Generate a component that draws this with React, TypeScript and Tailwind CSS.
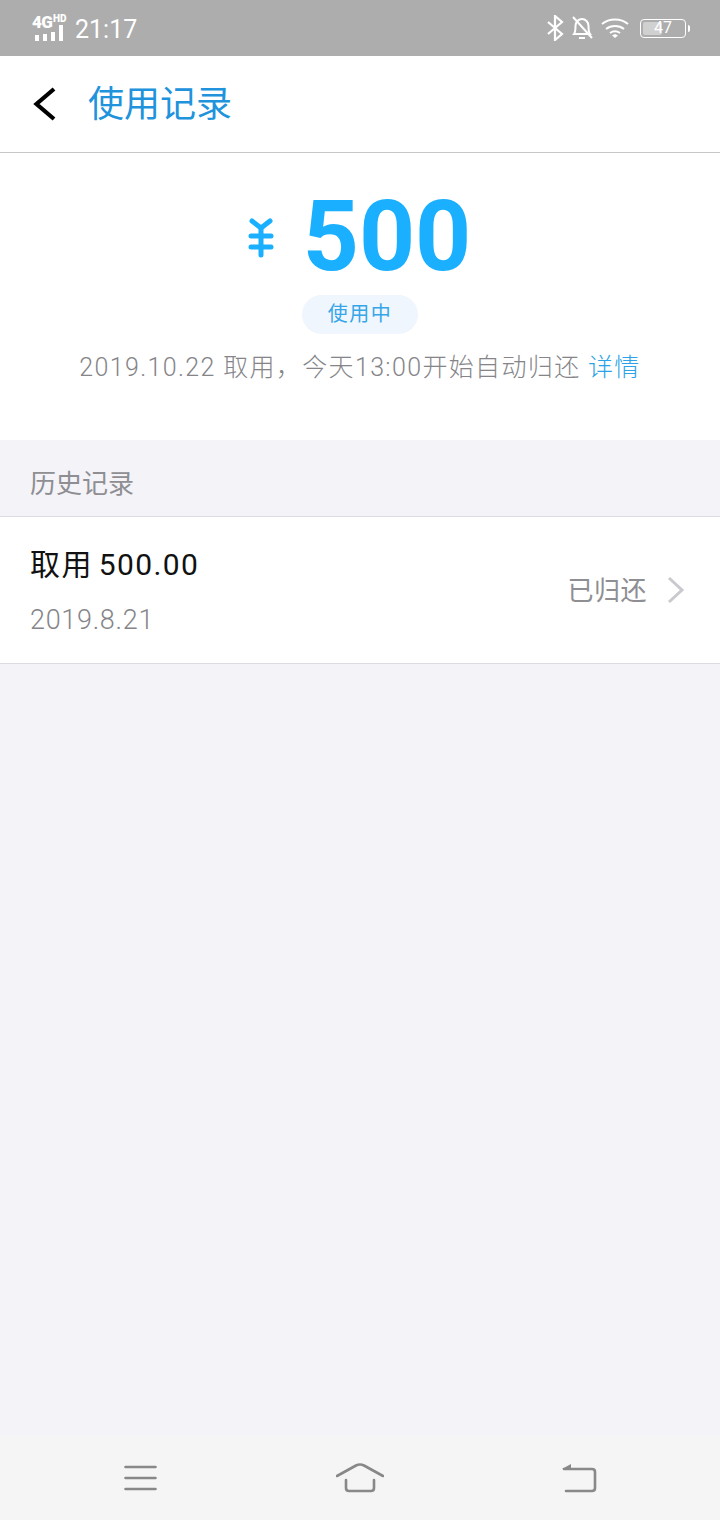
const CJK = 'Roboto, "Noto Sans CJK SC", sans-serif'

const StatusBar = () => (
  <div className="h-14 shrink-0 bg-[#adadad] flex items-center justify-between pl-8 pr-[34px] text-white">
    <div className="flex items-center">
      <div className="relative w-[34px] h-[28px] mr-[9px]">
        <span className="absolute left-0 top-[-1px] text-[17px] leading-[18px] font-black font-['Roboto',sans-serif] tracking-[-0.5px]">4G</span>
        <span className="absolute left-[21px] top-[0px] text-[10px] leading-[10px] font-black font-['Roboto',sans-serif]">HD</span>
        <svg className="absolute left-[3px] top-[11px]" width="29" height="18" viewBox="0 0 29 18" fill="#fff">
          <rect x="0" y="10" width="4" height="6" />
          <rect x="8" y="9" width="4" height="7" />
          <rect x="16" y="7" width="4" height="9" />
          <rect x="24" y="0" width="4" height="16" />
        </svg>
      </div>
      <span className="text-[25px] leading-none mt-[3px] font-['Roboto',sans-serif]">21:17</span>
    </div>
    <div className="flex items-center">
      <svg width="18" height="26" viewBox="0 0 18 26" fill="none" stroke="#fff" strokeWidth="2.2" className="mr-[7px]">
        <path d="M2 7l14 12-7 6V1l7 6L2 19" />
      </svg>
      <svg width="22" height="26" viewBox="0 0 22 26" fill="none" stroke="#fff" strokeWidth="2" className="mr-[8px]">
        <path d="M3 19c1.500-2 1.500-5 1.500-8 0-4 3-7 6.500-7s6.500 3 6.500 7c0 3 0 6 1.500 8z" />
        <path d="M8 23h6" />
        <path d="M2 2l19 21" />
      </svg>
      <svg width="28" height="22" viewBox="0 0 28 22" fill="none" stroke="#fff" strokeWidth="2" className="mr-[11px]">
        <path d="M1 7c7-6 19-6 26 0" />
        <path d="M5 12c5-4 13-4 18 0" />
        <path d="M9 16c3-2 7-2 10 0" />
        <path d="M11 18.500l3-1.500 3 1.500-3 2.500z" fill="#fff" stroke="none" />
      </svg>
      <div className="relative w-[46px] h-[19px] rounded-[4px] border border-white flex items-center justify-center">
        <div className="absolute left-[2px] top-[2px] bottom-[2px] w-[19px] rounded-[2px] bg-[#d0d0d0]" />
        <span className="relative text-[16px] leading-none font-['Roboto',sans-serif]">47</span>
        <div className="absolute right-[-5px] top-[5px] w-[2px] h-[7px] rounded-r-sm bg-white" />
      </div>
    </div>
  </div>
)

const Header = () => (
  <div className="h-[97px] shrink-0 bg-white border-b border-[#c8c8c8] flex items-center pl-[33px] pb-[1px]">
    <svg width="23" height="34" viewBox="0 0 23 34" fill="none" stroke="#000" strokeWidth="4.2">
      <path d="M21 2L3.500 17 21 32" />
    </svg>
    <h1 className="ml-[32px] mt-[3px] text-[36px] leading-none text-[#2093dc]" style={{ fontFamily: CJK }}>使用记录</h1>
  </div>
)

const Hero = () => (
  <div className="h-[287px] shrink-0 bg-white flex flex-col items-center">
    <div className="flex items-center h-[142px] pr-[1px]">
      <svg width="26" height="40" viewBox="0 0 26 40" fill="none" stroke="#1ab0ff" strokeWidth="5" strokeLinecap="round" strokeLinejoin="round" className="mr-[29px] mt-[28px]">
        <path d="M4 3l9 7 9-7" />
        <path d="M3 18h20M3 29h20M13 11v26" />
      </svg>
      <span className="text-[98px] leading-none font-bold text-[#1ab0ff] font-['Roboto',sans-serif] mt-[25px]">500</span>
    </div>
    <div className="w-[116px] h-[39px] pb-[2px] rounded-full bg-[#f0f6fd] flex items-center justify-center text-[20px] tracking-[1.5px] text-[#35a6e8]" style={{ fontFamily: CJK }}>
      使用中
    </div>
    <p className="mt-[16px] text-[25px] leading-[36px] tracking-[1.35px] font-light text-[#858589] whitespace-nowrap" style={{ fontFamily: CJK }}>
      2019.10.22 取用，今天13:00开始自动归还 <span className="text-[#2ba3e6]">详情</span>
    </p>
  </div>
)

const HistoryRow = () => (
  <div className="h-[148px] shrink-0 bg-white border-y border-[#dcdce0] flex items-center justify-between pl-[30px] pr-[35px]">
    <div className="pt-[4px]">
      <div className="text-[30px] leading-[40px] tracking-[1.4px] [word-spacing:-3px] text-[#111]" style={{ fontFamily: CJK }}>取用 500.00</div>
      <div className="mt-[15px] text-[27px] leading-[40px] tracking-[0.7px] font-light text-[#858589]" style={{ fontFamily: CJK }}>2019.8.21</div>
    </div>
    <div className="flex items-center">
      <span className="text-[26px] leading-none tracking-[0.5px] text-[#8e8e93] mt-[2px]" style={{ fontFamily: CJK }}>已归还</span>
      <svg width="18" height="28" viewBox="0 0 18 28" fill="none" stroke="#c9c9ce" strokeWidth="3" className="ml-[20px]">
        <path d="M2 2l13 12L2 26" />
      </svg>
    </div>
  </div>
)

const NavBar = () => (
  <div className="h-[84px] shrink-0 bg-[#f5f5f5] flex items-center justify-between pl-[124px] pr-[124px] pb-[1px]">
    <svg width="33" height="26" viewBox="0 0 33 26" fill="none" stroke="#888" strokeWidth="2.6" strokeLinecap="round">
      <path d="M1.500 2h30M1.500 13h30M1.500 24h30" />
    </svg>
    <svg width="48" height="30" viewBox="0 0 48 30" fill="none" stroke="#888" strokeWidth="2.6" strokeLinecap="round" strokeLinejoin="round" className="ml-[2px]">
      <path d="M1 13L20 2.500c2.500-1.300 5.500-1.300 8 0L47 13" />
      <path d="M10 17v8c0 2 1 3 3 3h22c2 0 3-1 3-3v-8" />
    </svg>
    <svg width="36" height="30" viewBox="0 0 36 30" fill="none" stroke="#888" strokeWidth="2.6" strokeLinecap="round" strokeLinejoin="round" className="ml-[1px] mr-[-1px]">
      <path d="M5 28h26c2 0 3-1 3-3V9c0-2-1-3-3-3H3" />
      <path d="M1 6l9-5v5z" fill="#888" stroke="none" />
    </svg>
  </div>
)

export default function App() {
  return (
    <div className="w-[720px] h-[1520px] flex flex-col bg-[#f3f3f8] overflow-hidden">
      <StatusBar />
      <Header />
      <Hero />
      <div className="h-[76px] shrink-0 flex items-center pl-[30px] pt-[12px] text-[26px] text-[#8e8e93]" style={{ fontFamily: CJK }}>
        历史记录
      </div>
      <HistoryRow />
      <div className="flex-1" />
      <NavBar />
    </div>
  )
}
